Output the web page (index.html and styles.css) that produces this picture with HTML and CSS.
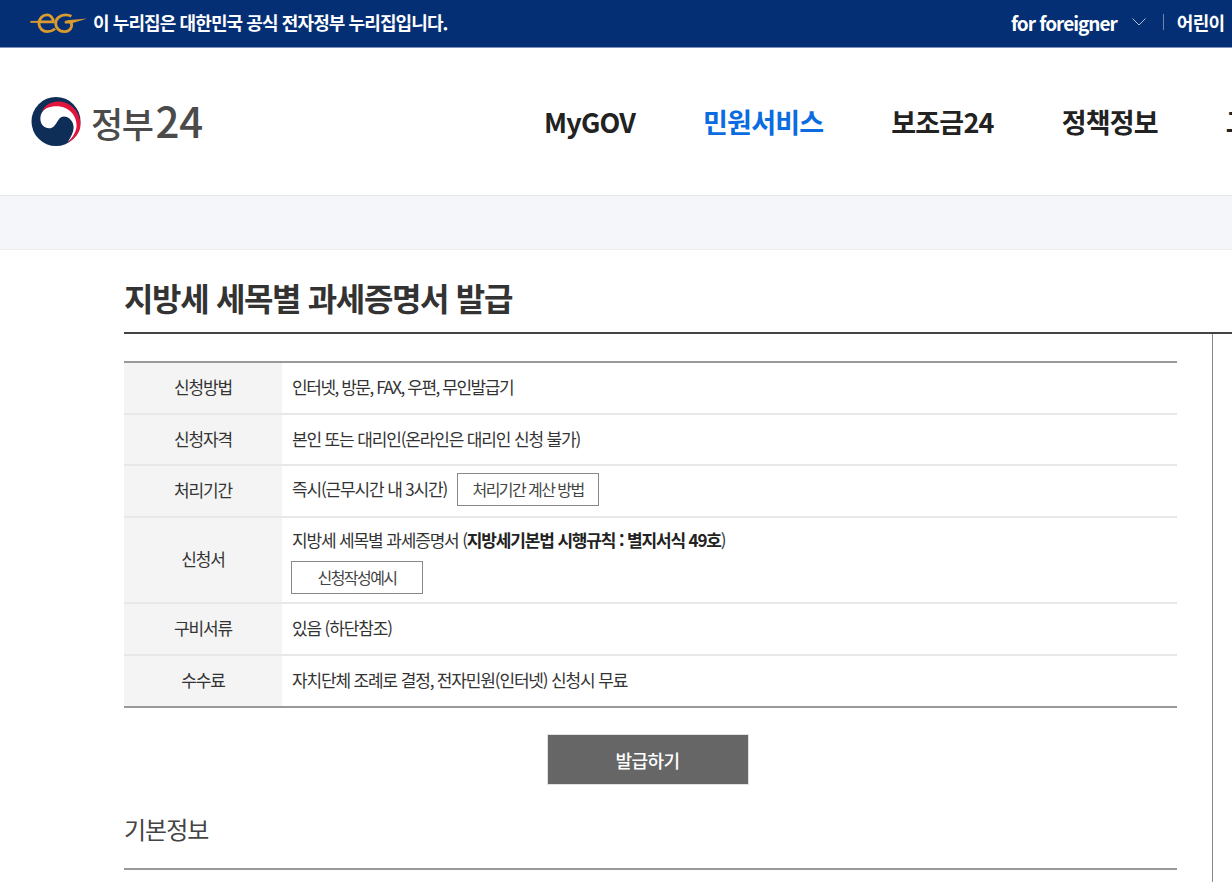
FILE: index.html
```html
<!DOCTYPE html>
<html lang="ko">
<head>
<meta charset="utf-8">
<title>지방세 세목별 과세증명서 발급</title>
<link rel="stylesheet" href="styles.css">
</head>
<body>
<div class="gov-bar">
  <svg class="eg-logo" viewBox="0 0 60 22" aria-hidden="true">
    <path class="eg-line" d="M0 9.300H18"/>
    <path class="eg-stroke" d="M10 9.300H24C24 4.500 20.500 2 17.500 2C12.500 2 9 6 9 11C9 16 13 19.500 18 19.500C21 19.500 23.500 18.500 26 16.500"/>
    <path class="eg-stroke" d="M43 3.500C41 2.500 39 2 37 2C31 2 26.500 6 26.500 11C26.500 16 30.500 19.500 35.500 19.500C39 19.500 42 17.500 43 14.500C43.500 12.500 43 10.500 42 9.500H36"/>
    <path class="eg-tail" d="M38 7.500L59.500 5.800L42 11.200Z"/>
  </svg>
  <span class="gov-text">이 누리집은 대한민국 공식 전자정부 누리집입니다.</span>
  <div class="gov-right">
    <span class="foreigner">for foreigner</span>
    <svg class="chevron" viewBox="0 0 14 8" aria-hidden="true"><path d="M0.500 0.500L7 7L13.500 0.500"/></svg>
    <span class="sep"></span>
    <span class="kids">어린이</span>
  </div>
</div>
<header class="site-header">
  <div class="logo">
    <svg class="taegeuk" viewBox="0 0 50 50" aria-hidden="true">
      <circle cx="25" cy="25" r="25" fill="#0f2e57"/>
      <path fill="#fff" d="M9 22C9 14 17 8 26 8C38 8 47 18 47 29C47 35 42 42 37 46C40 41 43 36 43 31C43 25 38 20 33 20C26 20 26 32 18 32C13 32 9 28 9 22Z"/>
      <path fill="#e0143c" d="M10 15C14 8 20 4.500 27 4.500C40 4.500 50 15 50 28C50 36 44 43 37 46.500C42 41 46 35 46 29C46 18 37 9.500 26 9.500C20 9.500 14 11 10 15Z"/>
    </svg>
    <span class="logo-text">정부<span class="logo-num">24</span></span>
  </div>
  <nav class="main-nav">
    <a class="nav-item">MyGOV</a>
    <a class="nav-item active">민원서비스</a>
    <a class="nav-item">보조금24</a>
    <a class="nav-item">정책정보</a>
    <a class="nav-item">고객센터</a>
  </nav>
</header>
<div class="strip"></div>
<main class="main">
  <h1 class="page-title">지방세 세목별 과세증명서 발급</h1>
  <div class="content">
    <table class="info">
      <tbody>
        <tr class="tight"><th>신청방법</th><td>인터넷, 방문, FAX, 우편, 무인발급기</td></tr>
        <tr class="short"><th>신청자격</th><td>본인 또는 대리인(온라인은 대리인 신청 불가)</td></tr>
        <tr><th>처리기간</th><td>즉시(근무시간 내 3시간)<a class="outline calc">처리기간 계산 방법</a></td></tr>
        <tr class="tall"><th>신청서</th><td>지방세 세목별 과세증명서 (<strong>지방세기본법 시행규칙 : 별지서식 49호</strong>)<div class="sample-row"><a class="outline sample">신청작성예시</a></div></td></tr>
        <tr><th>구비서류</th><td>있음 (하단참조)</td></tr>
        <tr><th>수수료</th><td>자치단체 조례로 결정, 전자민원(인터넷) 신청시 무료</td></tr>
      </tbody>
    </table>
    <div class="actions"><a class="issue">발급하기</a></div>
    <h2 class="section-title">기본정보</h2>
    <div class="section-rule"></div>
  </div>
</main>
</body>
</html>
```
FILE: styles.css
```css
* { box-sizing: border-box; }
html, body { margin: 0; padding: 0; height: 100%; overflow: hidden; background: #fff; }
body { font-family: "Noto Sans CJK KR", "Noto Sans", sans-serif; color: #333; width: 1232px; }

.gov-bar { height: 48px; background: #042f75; border-bottom: 1px solid #7f93ba; display: flex; align-items: center; padding: 0 0 3px 30px; color: #fff; overflow: hidden; white-space: nowrap; }
.eg-logo { width: 58px; height: 21px; flex: none; margin-top: 3px; }
.eg-line { fill: none; stroke: #d99b30; stroke-width: 2; }
.eg-stroke { fill: none; stroke: #d99b30; stroke-width: 3; }
.eg-tail { fill: #d99b30; }
.gov-text { margin-left: 5px; font-size: 18px; font-weight: 700; letter-spacing: -0.9px; }
.gov-right { margin-left: auto; display: flex; align-items: center; flex: none; width: 221px; }
.foreigner { font-size: 19px; font-weight: 700; letter-spacing: -1px; }
.chevron { width: 14px; height: 8px; margin-left: 15px; fill: none; stroke: #aebbd4; stroke-width: 1; }
.sep { width: 1px; height: 16px; background: #6f86b0; margin-left: 17px; }
.kids { margin-left: 13px; font-size: 18px; font-weight: 700; letter-spacing: -0.7px; }

.site-header { height: 148px; border-bottom: 1px solid #e6e6e6; display: flex; align-items: center; padding: 0 0 1px 31px; overflow: hidden; white-space: nowrap; }
.logo { display: flex; align-items: center; width: 513px; flex: none; }
.taegeuk { width: 50px; height: 49px; flex: none; }
.logo-text { margin-left: 10px; font-size: 35px; font-weight: 500; letter-spacing: -1.5px; color: #4b4b4b; line-height: 46px; }
.logo-num { font-size: 42px; letter-spacing: 0; margin-left: 3px; }
.main-nav { display: flex; gap: 68px; flex: none; }
.nav-item { font-size: 27px; font-weight: 700; color: #222; letter-spacing: -0.8px; }
.nav-item.active { color: #0a6ce0; }

.strip { height: 54px; background: #f4f6fa; border-bottom: 1px solid #eeeeee; }

.main { padding-left: 124px; }
.page-title { margin: 0; height: 84px; padding-top: 24px; font-size: 32px; line-height: 46px; font-weight: 700; letter-spacing: -1.35px; color: #333; border-bottom: 2px solid #444; }
.content { width: 1089px; border-right: 1px solid #888; padding-top: 27px; padding-right: 35px; height: 600px; }

.info { width: 1053px; border-collapse: collapse; border-top: 2px solid #999; border-bottom: 2px solid #999; font-size: 17px; letter-spacing: -1.15px; }
.info tr { height: 52px; }
.info tr.short { height: 51px; }
.info tr.tall { height: 86px; }
.info tr.tight td { letter-spacing: -1.45px; }
.info tr + tr { border-top: 2px solid #e8e8e8; }
.info th { width: 158px; background: #f4f4f4; font-weight: 400; text-align: center; padding: 0 0 3px; }
.info td { padding: 0 0 3px 10px; }
.info tr.tall td { padding-bottom: 0; }
.info strong { font-weight: 700; color: #222; }
.outline { display: inline-block; border: 1px solid #888; background: #fff; color: #444; text-align: center; height: 33px; line-height: 31px; font-size: 16px; letter-spacing: -1.55px; }
.calc { width: 142px; margin-left: 10px; }
.sample { width: 132px; margin-left: -1px; }
.sample-row { margin-top: 9px; line-height: 0; }

.actions { display: flex; justify-content: center; margin-top: 26px; width: 1047px; }
.issue { width: 202px; height: 51px; background: #666; color: #fff; display: flex; align-items: center; justify-content: center; font-size: 18px; font-weight: 500; letter-spacing: -0.5px; border: 1px solid #e2e2e2; }
.section-title { margin: 24px 0 0; font-size: 24px; line-height: 40px; font-weight: 400; letter-spacing: -1px; color: #444; }
.section-rule { margin-top: 19px; width: 1053px; border-top: 2px solid #999; }
```
